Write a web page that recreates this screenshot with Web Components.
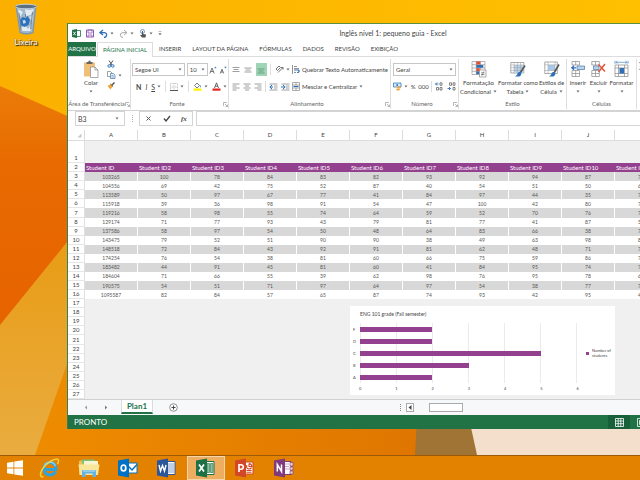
<!DOCTYPE html>
<html lang="pt-BR">
<head>
<meta charset="utf-8">
<title>Inglês nível 1: pequeno guia - Excel</title>
<style>
    html, body {
        height: 100%;
        margin: 0;
    }

    body {
        overflow: hidden;
        font-family: Lato, "Open Sans", sans-serif;
        font-size: 6px;
        line-height: 8px;
        color: #444;
    }
</style>
</head>
<body>
<desk-top>
    <desktop-shortcut icon="bin">Lixeira</desktop-shortcut>
    <excel-window slot="window"></excel-window>
</desk-top>

<script>
    const icons = {
        // title bar
        excel: [9, 9, '<path d="M0 1l5-1v9l-5-1z" fill="#1e7145"/><path d="M5 1.5h3.5v6H5" fill="none" stroke="#1e7145" stroke-width=".8"/><path d="M1.3 2.8l2.4 3.4M3.7 2.8L1.3 6.2" stroke="#fff" stroke-width=".9"/>'],
        save: [8, 9, '<path d="M.5 1h7v7h-7z" fill="#fff" stroke="#8e5bb0"/><path d="M2 1h4v3H2zM2 8V6h4v2" fill="none" stroke="#8e5bb0" stroke-width=".8"/>'],
        undo: [9, 9, '<path d="M4 1L1 3.6 4 6M1.200 3.600H5q3 .2 2.600 2.600T5 8.500" fill="none" stroke="#2f6fb7" stroke-width="1.300"/>'],
        redo: [9, 9, '<path d="M5 1l3 2.600L5 6M7.800 3.600H4q-3 .2-2.600 2.600T4 8.500" fill="none" stroke="#a8a8a8"/>'],
        touch: [8, 9, '<circle cx="3.500" cy="2.500" r="2" fill="none" stroke="#4b86c4" stroke-width=".8"/><path d="M3 2h1v3l3 .6-.4 3H3L1 6l2-.3z" fill="#555"/>'],
        more: [4, 6, '<path d="M.5 1.500h3M.8 3.500h2.400L2 5z" fill="#777" stroke="#777" stroke-width=".5"/>'],
        down: [4, 3, '<path d="M.5.5h3L2 2.500z" fill="#666"/>'],
        launch: [5, 5, '<path d="M.5 4V.5H4M2 2l2.400 2.400M4.500 2.500v2h-2" fill="none" stroke="#999" stroke-width=".7"/>'],
        // clipboard
        paste: [16, 18, '<rect x="1" y="2.500" width="11" height="14" fill="#f0c078"/><path d="M3.500 4V2h1.700q.1-1.500 1.300-1.500T7.800 2h1.700v2z" fill="#666"/><path d="M7.500 7h4.500l3 3v7.500H7.500z" fill="#fff" stroke="#888" stroke-width=".7"/><path d="M12 7v3h3" fill="none" stroke="#888" stroke-width=".7"/>'],
        cut: [8, 8, '<path d="M2 .5L5 5M6 .5L3 5" stroke="#555"/><circle cx="2.200" cy="6" r="1.300" fill="none" stroke="#3b7cc2"/><circle cx="5.800" cy="6" r="1.300" fill="none" stroke="#3b7cc2"/>'],
        copy: [9, 8, '<path d="M.5.5h3l1.500 1.500v3.500H.5z" fill="#fff" stroke="#777" stroke-width=".7"/><path d="M3.500 2.500h3L8 4v3.500H3.500z" fill="#e7f0fa" stroke="#4b76a8" stroke-width=".7"/><path d="M4.500 4.500h2M4.500 6h2.500" stroke="#4b86c4" stroke-width=".6"/>'],
        brush: [8, 8, '<path d="M7.500.5L5 3" stroke="#555" stroke-width="1.400"/><path d="M4 2l2 2-2.500 3.500L.5 4z" fill="#f2a33a"/><path d="M3.500 2l2.600 2.400" stroke="#555"/>'],
        // font
        grow: [8, 8, '<path d="M.8 7.500L3 2l2.200 5.500M1.600 5.500h2.800" fill="none" stroke="#555" stroke-width=".8"/><path d="M5.200 2.300L6.400.5l1.200 1.800z" fill="#3b7cc2"/>'],
        shrink: [8, 8, '<path d="M1.300 7.500L3 3.200l1.700 4.300M1.900 6h2.200" fill="none" stroke="#555" stroke-width=".8"/><path d="M5.200.8l1.200 1.700L7.600.8z" fill="#3b7cc2"/>'],
        borders: [8, 8, '<path d="M.5.5h7v7h-7zM4 .5v7M.5 4h7" fill="none" stroke="#aaa" stroke-width=".6" stroke-dasharray="1 .5"/><path d="M0 7.500h8" stroke="#555"/>'],
        fill: [9, 9, '<path d="M1.500 3.500L4 1l2.500 2.500L4 6z" fill="#fff" stroke="#555" stroke-width=".8"/><path d="M6.500 2.500q2 1 1.500 3.500-1-1.500-1.500-3.500" fill="#3b7cc2"/><path d="M.5 6.500h8v2.200h-8z" fill="#fff200"/>'],
        color: [9, 9, '<path d="M2.500 6L4.500.8 6.500 6M3.200 4.200h2.600" fill="none" stroke="#555" stroke-width=".9"/><path d="M.5 6.500h8v2.200h-8z" fill="#e32222"/>'],
        // alignment
        top: [8, 8, '<path d="M.5 1.500h7M1.500 3.500h5M.5 5.500h7" stroke="#777" stroke-width=".7"/>'],
        middle: [8, 8, '<path d="M.5 2h7M1.500 4h5M.5 6h7" stroke="#777" stroke-width=".7"/>'],
        bottom: [8, 8, '<path d="M.5 3h7M1.500 5h5M.5 7h7" stroke="#4d8a69" stroke-width=".7"/>'],
        orient: [9, 9, '<path d="M1 4l3-3 1.500 1.500-3 3zM3 7.500L8 2.500M8 2.500v2M8 2.500H6" fill="none" stroke="#666" stroke-width=".9"/>'],
        left: [8, 8, '<path d="M.5 1h7M.5 3h4M.5 5h7M.5 7h4" stroke="#777" stroke-width=".7"/>'],
        center: [8, 8, '<path d="M.5 1h7M2 3h4M.5 5h7M2 7h4" stroke="#777" stroke-width=".7"/>'],
        right: [8, 8, '<path d="M.5 1h7M3.500 3h4M.5 5h7M3.500 7h4" stroke="#777" stroke-width=".7"/>'],
        outdent: [9, 8, '<path d="M.5 1h8M5 3h3.500M5 5h3.500M.5 7h8" stroke="#777" stroke-width=".7"/><path d="M3 2L.8 4 3 6M1 4h3" fill="none" stroke="#2f6fb7"/>'],
        indent: [9, 8, '<path d="M.5 1h8M5 3h3.500M5 5h3.500M.5 7h8" stroke="#777" stroke-width=".7"/><path d="M2 2l2.200 2L2 6M0 4h4" fill="none" stroke="#2f6fb7"/>'],
        wrap: [8, 9, '<path d="M.5 0v9M2 1.500h3M2 3.500h5M2 7.500h2" stroke="#777" stroke-width=".8"/><path d="M2 5h4.500q1.500 1.500-.5 2.500H5" fill="none" stroke="#2f6fb7" stroke-width="1.200"/>'],
        merge: [8, 9, '<path d="M.5.5h7v8h-7zM4 .5V3M4 6v2.500M.5 3h7M.5 6h7" fill="none" stroke="#888" stroke-width=".7"/><path d="M1.500 4.500h5" stroke="#2f6fb7" stroke-width="1.200"/>'],
        // number
        money: [9, 9, '<path d="M.5 1h7.500v4H.5z" fill="#dcebfa" stroke="#2f7cc2" stroke-width=".8"/><circle cx="4.200" cy="3" r="1" fill="#2f7cc2"/><ellipse cx="6" cy="5.500" rx="2" ry=".9" fill="#f2a33a"/><ellipse cx="5" cy="7.500" rx="2" ry=".9" fill="#f2a33a"/>'],
        moreDigits: [9, 9, '<path d="M.5 2h3M2 .5L.5 2 2 3.500" fill="none" stroke="#2f6fb7" stroke-width=".9"/><path d="M5 .8h2v2.500H5zM1.500 5.500h2V8h-2zM5 5.500h2V8H5z" fill="none" stroke="#666" stroke-width=".8"/>'],
        lessDigits: [9, 9, '<path d="M.5 6.500h3M2 5l1.500 1.500L2 8" fill="none" stroke="#2f6fb7" stroke-width=".9"/><path d="M2.500.8h2v2.500h-2zM6 .8h2v2.500H6zM6 5.500h2V8H6z" fill="none" stroke="#666" stroke-width=".8"/>'],
        // styles
        conditional: [16, 18, '<path d="M1 1.500h13v13H1zM1 4.700h13M1 8h13M1 11.300h13M5.300 1.500v13M9.600 1.500v13" fill="#fff" stroke="#888" stroke-width=".6"/><path d="M5.300 1.500h4v3h-4zM5.300 8.200h3.500v3H5.300z" fill="#e2502f"/><path d="M5.300 4.900h7v2.900h-7zM5.300 11.500h3v2.800h-3z" fill="#2f6fb7"/><path d="M8.500 10h6.500v7H8.500z" fill="#fff" stroke="#888" stroke-width=".7"/><path d="M10 12.800h3.500M10 14.500h3.500M12.800 11.500l-2 4.200" stroke="#555" stroke-width=".6"/>'],
        table: [16, 18, '<path d="M.8 2.500h13v10.500H.8z" fill="#fff" stroke="#888" stroke-width=".7"/><path d="M4 5h9.500v8H4z" fill="#bcd5ef"/><path d="M.8 5h13M.8 7.700h13M.8 10.400h13M4 2.500V13M7.400 2.500V13M10.600 2.500V13" stroke="#999" stroke-width=".5"/><path d="M15 5.500l-4.500 7" stroke="#555" stroke-width="1.600"/><path d="M10.800 11.500q1.500 3.500-1.500 5H5q2.500-1.500 3-4z" fill="#2f6fb7"/>'],
        cellStyle: [16, 18, '<path d="M.8 2h12.500v11.500H.8z" fill="#fff" stroke="#888" stroke-width=".7"/><path d="M4 5h7v5.500H4z" fill="#a9c9ec"/><path d="M.8 4.800h12.500M.8 10.500h12.500M4 2v11.500M11 2v11.500" stroke="#999" stroke-width=".5"/><path d="M15 4.500l-4.500 7.500" stroke="#555" stroke-width="1.600"/><path d="M10.800 11.500q1.500 3.500-1.500 5H5q2.500-1.500 3-4z" fill="#2f6fb7"/>'],
        // cells
        insert: [14, 18, '<path d="M1 1.500h7.500v3.500H1zM4.700 1.500v3.500M1 10.500h7.500v6H1zM4.700 10.500v6M1 13.500h7.500" fill="#fff" stroke="#888" stroke-width=".7"/><path d="M6 6h7.500v3.500H6z" fill="#bcd5ef" stroke="#4b76a8" stroke-width=".7"/><path d="M3 5.800L.8 7.800 3 9.800M1 7.800h4" fill="none" stroke="#2f6fb7" stroke-width="1.200"/>'],
        remove: [15, 18, '<path d="M.8 1.500h7.500v3.500H.8zM4.500 1.500v3.500M.8 10.500h7.500v6H.8zM4.500 10.500v6M.8 13.500h7.500" fill="#fff" stroke="#888" stroke-width=".7"/><path d="M2.500 6h5.500v3.500H2.500z" fill="#bcd5ef" stroke="#4b76a8" stroke-width=".7"/><path d="M7.500 4.500l6.500 7M14 4l-6.500 8" stroke="#e2502f" stroke-width="1.400"/>'],
        format: [15, 18, '<path d="M1 5h13v11.500H1zM4.500 5v11.500M10.500 5v11.500M1 8h13M1 13.500h13" fill="#fff" stroke="#888" stroke-width=".7"/><path d="M5.500 8h4.500v5.500H5.500z" fill="#2f6fb7"/><path d="M1 .8v3M14 .8v3M2 2.300h11M3.500.8L2 2.300l1.500 1.500M11.500.8L13 2.300l-1.500 1.500" fill="none" stroke="#4b86c4" stroke-width=".7"/>'],
        sum: [6, 18, '<path d="M5.500 2.500h-5l3 3.500-3 3.500h5" fill="none" stroke="#777" stroke-width=".8"/>'],
        // formula bar
        cross: [7, 7, '<path d="M1.500 1.500l4 4M5.500 1.500l-4 4" stroke="#555"/>'],
        check: [8, 7, '<path d="M1 3.500l2 2.500 4-5" fill="none" stroke="#444" stroke-width="1.300"/>'],
        // sheet
        corner: [5, 5, '<path d="M4.500.5v4h-4z" fill="#c8c8c8"/>'],
        prev: [4, 5, '<path d="M3 .5v4L.8 2.500z" fill="#999"/>'],
        next: [4, 5, '<path d="M1 .5v4l2.200-2z" fill="#777"/>'],
        add: [9, 9, '<circle cx="4.500" cy="4.500" r="3.800" fill="#fff" stroke="#777" stroke-width=".8"/><path d="M4.500 2.500v4M2.500 4.500h4" stroke="#444"/>'],
        scroll: [4, 5, '<path d="M3.500 0v5L.5 2.500z" fill="#444"/>'],
        viewNormal: [9, 9, '<path d="M.5.5h8v8h-8zM.5 3h8M.5 5.700h8M3.200.5v8M5.800.5v8" fill="none" stroke="#fff" stroke-width=".8"/>'],
        viewPage: [9, 9, '<path d="M.5.5h8v8h-8z" fill="none" stroke="#fff" stroke-width=".8"/><path d="M2.500 2.500h4v4h-4z" fill="none" stroke="#fff" stroke-width=".8"/>'],
        // desktop
        bin: [24, 32, '<path d="M1.500 3.500l21-.5-3 27q-7 3-14 0z" fill="#7f97ad"/><path d="M3 5l18-.5-2.800 24.500q-6 2-11.500 0z" fill="#a3b8ca"/><path d="M4 6l5 3-3 5zM11 6l5 1 4-1-3 6-5 1zM7 25l4-3 3 4 3-5-.5 7h-8z" fill="#e3ecf3"/><path d="M15 14l4-2-.8 7z" fill="#d2dfe9"/><path d="M6 17l2.500-3 3 1 2-2 2.500 4-1.500 5-4 2-4-2z" fill="#2d70bb"/><path d="M8.500 17.500l2.500-.5 1 2.500-2.500 1.500z" fill="#c9dced"/><path d="M5 10l2 17M11.500 11v3M18.500 9l-2 17" stroke="#63798f" stroke-width=".8"/><ellipse cx="12" cy="3.500" rx="10.800" ry="2.300" fill="#5d7081" stroke="#c5d1db"/>'],
        // taskbar
        windows: [18, 18, '<path d="M1 3.800l6.500-1V8.600H1zM8.300 2.600L17 1.300v7.300H8.300zM1 9.400h6.500v5.900L1 14.300zM8.300 9.400H17v7.300l-8.700-1.300z" fill="#fff"/>'],
        ie: [22, 20, '<path d="M16.500 13.500q-2 3.800-6 3.500-5.300-.6-5.300-6.300 0-5.800 5.600-6.200 6 0 6 7H7" fill="none" stroke="#2fa3e0" stroke-width="3"/><path d="M5 9.500q.6-5 5.700-5.300 4.500 0 5.800 4" fill="none" stroke="#8fd4f7" stroke-width="1.200"/><path d="M4.500 18.500q-3.300 1-3-2.500Q3 8.500 12 3q6.500-3.500 7.500-.5.300 1.500-1 3.500" fill="none" stroke="#f6d13c" stroke-width="1.500"/>'],
        folder: [22, 20, '<path d="M1 3l5-1 1 2h13v13H1z" fill="#e7c35c"/><path d="M4 1.500h13v4H4z" fill="#7bbf7c"/><path d="M6 3h14v4H6z" fill="#f9f3d0"/><path d="M.5 6.500h21L20 17H2z" fill="#f8e79a"/><path d="M4 19v-6q0-1 1-1h12q1 0 1 1v6h-3.500v-3.500h-7V19z" fill="#62b4e6"/><path d="M5 13h12" stroke="#bfe3f7"/>'],
        outlook: [20, 20, '<path d="M9 5h10v10H9z" fill="#fff" stroke="#0072c6"/><path d="M10 8l4 4 5-5.500" fill="none" stroke="#0072c6" stroke-width="1.500"/><path d="M0 2.500L11 .5v19l-11-2z" fill="#0072c6"/><ellipse cx="5.500" cy="10" rx="2.300" ry="3" fill="none" stroke="#fff" stroke-width="1.700"/>'],
        word: [20, 20, '<path d="M9 3.500h9v13H9z" fill="#fff" stroke="#2b579a"/><path d="M11 6h6M11 8h6M11 10h6M11 12h6M11 14h6" stroke="#6f93c6" stroke-width=".9"/><path d="M0 2.500L11 .5v19l-11-2z" fill="#2b579a"/><path d="M2 7l1.500 6 2-5.500 2 5.500L9 7" fill="none" stroke="#fff" stroke-width="1.400"/>'],
        excelApp: [20, 20, '<path d="M9 3.500h9v13H9z" fill="#fff" stroke="#1e7145"/><path d="M11 5.500h2.500v9H11zM14.500 5.500H17v9h-2.500z" fill="#8ec0a2" stroke="#1e7145" stroke-width=".6"/><path d="M0 2.500L11 .5v19l-11-2z" fill="#1e7145"/><path d="M3 6.500l5 7M8 6.500l-5 7" stroke="#fff" stroke-width="1.700"/>'],
        powerpoint: [20, 20, '<path d="M9 4h9v12H9z" fill="#fff" stroke="#d24726"/><path d="M14 5.500v3h3q-.5-3-3-3M12 7q-1.500 3.500 2 4 2 0 2.500-1.500M11.500 12.500h5M11.500 14.200h5" fill="none" stroke="#d24726" stroke-width="1.100"/><path d="M0 2.500L11 .5v19l-11-2z" fill="#d24726"/><path d="M4 14V6.800h2q2.300.2 2.300 2.200T6 11.300H4" fill="none" stroke="#fff" stroke-width="1.600"/>'],
        onenote: [20, 20, '<path d="M9 3.500h8v13H9z" fill="#fff" stroke="#80397b"/><path d="M16 4.500h3v3.500h-3zM16 9h3v3h-3zM16 13h3v3h-3z" fill="#e6d0e5" stroke="#80397b" stroke-width=".6"/><path d="M11 6h4M11 8.500h4M11 11h4" stroke="#b98bb6" stroke-width=".8"/><path d="M0 2.500L11 .5v19l-11-2z" fill="#80397b"/><path d="M3.300 13.500v-7l4.200 7v-7" fill="none" stroke="#fff" stroke-width="1.500"/>']
    };

    function icon(name) {
        const [w, h, body] = icons[name];
        return `<svg width="${w}" height="${h}" viewBox="0 0 ${w} ${h}" aria-hidden="true">${body}</svg>`;
    }

    // Shared reset, repeated in every shadow root
    const base = `
        * { box-sizing: border-box; }
        svg { display: block; flex: none; }
        button, select, input {
            font: inherit;
            color: inherit;
            margin: 0;
            padding: 0;
            border: 0;
            background: none;
            outline: none;
        }
        button { display: flex; align-items: center; justify-content: center; }
    `;

    class DeskTop extends HTMLElement {
        connectedCallback() {
            this.attachShadow({ mode: 'open' });
            this.shadowRoot.innerHTML = `
                <style>
                    ${base}
                    :host {
                        display: flex;
                        flex-direction: column;
                        height: 100vh;
                    }
                    main {
                        position: relative;
                        flex: 1;
                        min-height: 0;
                        overflow: hidden;
                    }
                    .wallpaper {
                        position: absolute;
                        width: 100%;
                        height: 100%;
                    }
                    .shortcuts {
                        position: relative;
                        display: flex;
                        padding: 3px 5px;
                    }
                    ::slotted([slot="window"]) {
                        position: absolute;
                        inset: 23px 0 26px 67px;
                    }
                </style>
                <main>
                    <svg class="wallpaper" viewBox="0 0 640 455" preserveAspectRatio="none" aria-hidden="true">
                        <defs>
                            <linearGradient id="sky" x1="0" x2="1"><stop offset="0" stop-color="#fbb000"/><stop offset="1" stop-color="#ffc000"/></linearGradient>
                            <linearGradient id="deep" x1="0" y1="0" x2="0" y2="1"><stop offset="0" stop-color="#ea7c08"/><stop offset=".25" stop-color="#e86a00"/><stop offset="1" stop-color="#e66000"/></linearGradient>
                            <linearGradient id="sand" x1="0" y1="0" x2="0" y2="1"><stop offset=".1" stop-color="#e99a10"/><stop offset="1" stop-color="#e9ac40"/></linearGradient>
                            <linearGradient id="floor" x1="0" x2="1"><stop offset="0" stop-color="#ee8c00"/><stop offset="1" stop-color="#dd7200"/></linearGradient>
                        </defs>
                        <path d="M0 0h640v455H0z" fill="url(#sky)"/>
                        <path d="M0 86l110 49v54L0 400z" fill="url(#deep)"/>
                        <path d="M0 325L110 189v266H0z" fill="url(#sand)"/>
                        <path d="M35 455L67 364l43-122h367v213z" fill="url(#floor)"/>
                        <path d="M418 400h50l9 55h-62z" fill="#a07434"/>
                        <path d="M465 400h175v55H477z" fill="#f3dfcb"/>
                    </svg>
                    <div class="shortcuts"><slot></slot></div>
                    <slot name="window"></slot>
                </main>
                <task-bar></task-bar>
            `;
        }
    }

    class DesktopShortcut extends HTMLElement {
        connectedCallback() {
            this.attachShadow({ mode: 'open' });
            this.shadowRoot.innerHTML = `
                <style>
                    ${base}
                    :host { display: block; width: 42px; }
                    button {
                        flex-direction: column;
                        gap: 2px;
                        width: 100%;
                        font-size: 8px;
                        line-height: 10px;
                        color: #fff;
                        text-shadow: 0 0 1px #444, 1px 1px 1px #000;
                    }
                </style>
                <button>${icon(this.getAttribute('icon'))}<span><slot></slot></span></button>
            `;
        }
    }

    class TaskBar extends HTMLElement {
        connectedCallback() {
            const apps = [
                ['ie', 'Internet Explorer'], ['folder', 'Explorador de Arquivos'], ['outlook', 'Outlook'],
                ['word', 'Word'], ['excelApp', 'Excel'], ['powerpoint', 'PowerPoint'], ['onenote', 'OneNote']
            ];
            this.attachShadow({ mode: 'open' });
            this.shadowRoot.innerHTML = `
                <style>
                    ${base}
                    :host {
                        display: flex;
                        gap: 1px;
                        height: 25px;
                        background: #e28200;
                        border-top: 1px solid #9c5a08;
                    }
                    button { width: 38px; }
                    button.start { width: 30px; }
                    button.active {
                        background: #eeae62;
                        border: 1px solid #f6d5ab;
                    }
                </style>
                <button class="start" aria-label="Iniciar">${icon('windows')}</button>
                ${apps.map(([name, label]) => `<button class="${name === 'excelApp' ? 'active' : ''}" aria-label="${label}">${icon(name)}</button>`).join('')}
            `;
        }
    }

    class ExcelWindow extends HTMLElement {
        connectedCallback() {
            this.attachShadow({ mode: 'open' });
            this.shadowRoot.innerHTML = `
                <style>
                    ${base}
                    :host {
                        display: flex;
                        flex-direction: column;
                        overflow: hidden;
                        background: #fff;
                        border-top: 1px solid #5e8f3e;
                        border-left: 1px solid #2f8159;
                    }
                    sheet-grid { flex: 1; min-height: 0; }
                </style>
                <title-bar>Inglês nível 1: pequeno guia - Excel</title-bar>
                <ribbon-tabs></ribbon-tabs>
                <ribbon-bar></ribbon-bar>
                <formula-bar></formula-bar>
                <sheet-grid>
                    <bar-chart></bar-chart>
                </sheet-grid>
                <sheet-tabs></sheet-tabs>
                <status-bar>PRONTO</status-bar>
            `;
        }
    }

    class TitleBar extends HTMLElement {
        connectedCallback() {
            this.attachShadow({ mode: 'open' });
            this.shadowRoot.innerHTML = `
                <style>
                    ${base}
                    :host { display: flex; align-items: center; height: 18px; padding-left: 4px; }
                    .tools { display: flex; align-items: center; gap: 5px; width: 88px; }
                    button { gap: 2px; }
                    h1 { flex: 1; margin: 0; padding-right: 14px; font-size: 7px; font-weight: normal; text-align: center; }
                </style>
                <div class="tools">
                    ${icon('excel')}
                    <button aria-label="Salvar">${icon('save')}</button>
                    <button aria-label="Desfazer">${icon('undo')}${icon('down')}</button>
                    <button aria-label="Refazer">${icon('redo')}${icon('down')}</button>
                    <button aria-label="Modo de toque">${icon('touch')}${icon('down')}</button>
                    <button aria-label="Personalizar">${icon('more')}</button>
                </div>
                <h1><slot></slot></h1>
            `;
        }
    }

    class RibbonTabs extends HTMLElement {
        connectedCallback() {
            const tabs = ['INSERIR', 'LAYOUT DA PÁGINA', 'FÓRMULAS', 'DADOS', 'REVISÃO', 'EXIBIÇÃO'];
            this.attachShadow({ mode: 'open' });
            this.shadowRoot.innerHTML = `
                <style>
                    ${base}
                    :host { display: flex; gap: 1px; height: 14px; }
                    button { padding: 0 5px; white-space: nowrap; }
                    .file { width: 28px; padding: 0; background: #217346; color: #fff; }
                    .active {
                        width: 56px;
                        margin-bottom: -1px;
                        background: #fff;
                        border: 1px solid #dcdcdc;
                        border-bottom: 0;
                        color: #217346;
                        z-index: 1;
                    }
                </style>
                <button class="file">ARQUIVO</button>
                <button class="active">PÁGINA INICIAL</button>
                ${tabs.map(t => `<button>${t}</button>`).join('')}
            `;
        }
    }

    class RibbonGroup extends HTMLElement {
        connectedCallback() {
            const launcher = this.hasAttribute('launcher');
            this.attachShadow({ mode: 'open' });
            this.shadowRoot.innerHTML = `
                <style>
                    ${base}
                    :host {
                        display: flex;
                        flex-direction: column;
                        flex: none;
                        border-right: 1px solid #dedede;
                    }
                    .body { flex: 1; display: flex; }
                    footer { display: flex; align-items: center; height: 10px; color: #666; white-space: nowrap; }
                    span { flex: 1; text-align: center; }
                </style>
                <div class="body"><slot></slot></div>
                <footer>
                    <span>${this.getAttribute('label')}</span>
                    ${launcher ? `<button aria-label="Mais opções">${icon('launch')}</button>` : ''}
                </footer>
            `;
        }
    }

    class RibbonBar extends HTMLElement {
        connectedCallback() {
            this.attachShadow({ mode: 'open' });
            this.shadowRoot.innerHTML = `
                <style>
                    ${base}
                    :host {
                        display: flex;
                        height: 55px;
                        padding: 2px 0 1px;
                        border-top: 1px solid #dcdcdc;
                        border-bottom: 1px solid #d2d2d2;
                    }
                    .rows, .stack { display: flex; flex-direction: column; }
                    .rows { width: 100%; padding: 4px 1px 0; gap: 4px; }
                    .row { display: flex; align-items: center; justify-content: space-between; height: 13px; }
                    .stack { gap: 3px; padding-top: 1px; }
                    .big { flex-direction: column; justify-content: flex-start; padding-top: 1px; line-height: 9px; }
                    .big span { display: flex; align-items: center; gap: 2px; white-space: nowrap; }
                    .big span + svg { margin-top: 3px; }
                    .tool { gap: 2px; white-space: nowrap; }
                    .tool.on { width: 11px; height: 13px; background: #9fd5b7; }
                    .box { display: flex; align-items: center; height: 13px; padding: 0 2px; border: 1px solid #c6c6c6; }
                    .box select { flex: 1; min-width: 0; appearance: none; }
                    .rule { width: 1px; height: 11px; background: #dedede; }
                    .next { width: 4px; margin-left: 2px; overflow: hidden; align-items: flex-start; }
                    b, i, u { font-size: 7px; }
                </style>
                <ribbon-group label="Área de Transferência" launcher style="width: 63px">
                    <div style="display: flex; padding-left: 13px; gap: 6px">
                        <button class="big" style="width: 20px">${icon('paste')}<span>Colar</span>${icon('down')}</button>
                        <div class="stack">
                            <button class="tool" aria-label="Recortar" style="align-self: flex-start">${icon('cut')}</button>
                            <button class="tool" aria-label="Copiar">${icon('copy')}${icon('down')}</button>
                            <button class="tool" aria-label="Pincel" style="align-self: flex-start">${icon('brush')}</button>
                        </div>
                    </div>
                </ribbon-group>
                <ribbon-group label="Fonte" launcher style="width: 98px">
                    <div class="rows">
                        <div class="row">
                            <label class="box" style="width: 53px"><select aria-label="Fonte"><option>Segoe UI</option></select>${icon('down')}</label>
                            <label class="box" style="width: 21px"><select aria-label="Tamanho"><option>10</option></select>${icon('down')}</label>
                            <button class="tool" aria-label="Aumentar">${icon('grow')}</button>
                            <button class="tool" aria-label="Diminuir">${icon('shrink')}</button>
                        </div>
                        <div class="row" style="padding-left: 4px">
                            <button><b>N</b></button>
                            <button><i>I</i></button>
                            <button class="tool"><u>S</u>${icon('down')}</button>
                            <span class="rule"></span>
                            <button class="tool" aria-label="Bordas">${icon('borders')}${icon('down')}</button>
                            <span class="rule"></span>
                            <button class="tool" aria-label="Preenchimento">${icon('fill')}${icon('down')}</button>
                            <button class="tool" aria-label="Cor da fonte">${icon('color')}${icon('down')}</button>
                        </div>
                    </div>
                </ribbon-group>
                <ribbon-group label="Alinhamento" launcher style="width: 162px">
                    <div class="rows" style="width: 62px; padding-left: 3px">
                        <div class="row">
                            <button aria-label="Superior">${icon('top')}</button>
                            <button aria-label="Meio">${icon('middle')}</button>
                            <button class="tool on" aria-label="Inferior">${icon('bottom')}</button>
                            <span class="rule"></span>
                            <button class="tool" aria-label="Orientação">${icon('orient')}${icon('down')}</button>
                        </div>
                        <div class="row">
                            <button aria-label="Esquerda">${icon('left')}</button>
                            <button aria-label="Centro">${icon('center')}</button>
                            <button aria-label="Direita">${icon('right')}</button>
                            <span class="rule"></span>
                            <button aria-label="Diminuir recuo">${icon('outdent')}</button>
                            <button aria-label="Aumentar recuo">${icon('indent')}</button>
                        </div>
                    </div>
                    <div class="rows" style="width: 99px; align-items: flex-start">
                        <div class="row"><button class="tool">${icon('wrap')}Quebrar Texto Automaticamente</button></div>
                        <div class="row"><button class="tool">${icon('merge')}Mesclar e Centralizar ${icon('down')}</button></div>
                    </div>
                </ribbon-group>
                <ribbon-group label="Número" launcher style="width: 68px">
                    <div class="rows" style="padding: 4px 2px 0">
                        <label class="box"><select aria-label="Formato"><option>Geral</option></select>${icon('down')}</label>
                        <div class="row">
                            <button class="tool" aria-label="Moeda">${icon('money')}${icon('down')}</button>
                            <button>%</button>
                            <button>000</button>
                            <span class="rule"></span>
                            <button aria-label="Aumentar casas">${icon('moreDigits')}</button>
                            <button aria-label="Diminuir casas">${icon('lessDigits')}</button>
                        </div>
                    </div>
                </ribbon-group>
                <ribbon-group label="Estilo" style="width: 108px">
                    <button class="big" style="width: 39px">${icon('conditional')}<span>Formatação</span><span>Condicional ${icon('down')}</span></button>
                    <button class="big" style="width: 40px">${icon('table')}<span>Formatar como</span><span>Tabela ${icon('down')}</span></button>
                    <button class="big" style="width: 27px">${icon('cellStyle')}<span>Estilos de</span><span>Célula ${icon('down')}</span></button>
                </ribbon-group>
                <ribbon-group label="Células" style="width: 70px">
                    <button class="big" style="width: 22px">${icon('insert')}<span>Inserir</span>${icon('down')}</button>
                    <button class="big" style="width: 19px">${icon('remove')}<span>Excluir</span>${icon('down')}</button>
                    <button class="big" style="width: 27px">${icon('format')}<span>Formatar</span>${icon('down')}</button>
                </ribbon-group>
                <button class="big next" aria-label="Soma">${icon('sum')}</button>
            `;
        }
    }

    class FormulaBar extends HTMLElement {
        connectedCallback() {
            this.attachShadow({ mode: 'open' });
            this.shadowRoot.innerHTML = `
                <style>
                    ${base}
                    :host { display: flex; align-items: center; gap: 3px; padding: 0 0 4px 7px; height: 19px; }
                    .name, .tools, .formula { height: 15px; border: 1px solid #d4d4d4; }
                    .name { display: flex; align-items: center; width: 50px; padding: 0 5px 0 2px; }
                    .name input { flex: 1; min-width: 0; font-size: 7px; }
                    .tools { display: flex; align-items: center; justify-content: space-around; width: 54px; }
                    .grip { width: 5px; height: 7px; margin-right: 3px; border-right: 1px dotted #aaa; }
                    .formula { flex: 1; min-width: 0; border-right: 0; }
                    .fx { font: italic bold 7px "Liberation Serif", serif; }
                </style>
                <label class="name"><input aria-label="Caixa de nome" value="B3">${icon('down')}</label>
                <span class="grip"></span>
                <div class="tools">
                    <button aria-label="Cancelar">${icon('cross')}</button>
                    <button aria-label="Inserir">${icon('check')}</button>
                    <button class="fx">fx</button>
                </div>
                <input class="formula" aria-label="Fórmula">
            `;
        }
    }

    class SheetGrid extends HTMLElement {
        connectedCallback() {
            const columns = [...'ABCDEFGHIJ', ''];
            const data = [
                [103265, 100, 78, 84, 83, 82, 93, 92, 94, 87, 78],
                [104556, 69, 42, 75, 52, 87, 40, 54, 51, 50, 62],
                [113589, 50, 97, 67, 77, 41, 84, 97, 44, 35, 71],
                [115918, 39, 36, 98, 91, 54, 47, 100, 42, 80, 74],
                [119216, 58, 98, 55, 74, 64, 59, 52, 70, 76, 73],
                [129174, 71, 77, 93, 43, 79, 81, 77, 41, 87, 55],
                [137586, 58, 97, 54, 50, 48, 64, 83, 66, 38, 78],
                [143475, 79, 52, 51, 90, 90, 38, 49, 63, 98, 87],
                [148518, 72, 84, 43, 92, 91, 81, 62, 48, 71, 72],
                [174254, 76, 54, 38, 81, 60, 66, 75, 59, 86, 75],
                [183482, 44, 91, 45, 81, 60, 41, 84, 95, 74, 71],
                [184604, 71, 66, 55, 39, 62, 98, 76, 95, 78, 60],
                [190575, 54, 51, 71, 97, 64, 97, 54, 38, 77, 71],
                [1095587, 82, 84, 57, 65, 87, 74, 93, 42, 95, 45]
            ];
            const cells = (row, list) => `<tr><th scope="row">${row}</th>${list.map(v => `<td>${v}</td>`).join('')}</tr>`;
            const empty = columns.map(() => '');
            const rows = [];
            for (let r = 17; r <= 27; r++) rows.push(cells(r, empty));

            this.attachShadow({ mode: 'open' });
            this.shadowRoot.innerHTML = `
                <style>
                    ${base}
                    :host { display: block; position: relative; overflow: hidden; background: #f0f0f0; }
                    table {
                        width: 600px;
                        height: 100%;
                        table-layout: fixed;
                        border-collapse: separate;
                        border-spacing: 0;
                        font-size: 5px;
                        line-height: 8px;
                    }
                    th, td { padding: 0; text-align: center; font-weight: normal; overflow: hidden; white-space: nowrap; }
                    th { background: #fff; font-size: 6px; }
                    thead th { height: 11px; border-right: 1px solid #dcdcdc; border-bottom: 1px solid #dcdcdc; }
                    thead svg { margin-left: 9px; }
                    tbody th { border-bottom: 1px solid #e6e6e6; border-right: 1px solid #e0e0e0; }
                    .tall th { height: 22px; vertical-align: bottom; }
                    .names td {
                        background: #93408f;
                        color: #fff;
                        font-size: 6px;
                        text-align: left;
                        padding-left: 1px;
                    }
                    .data td { background: #fff; border-right: 1px solid #fff; color: #555; }
                    .data tr:nth-child(odd) td { background: #d8d8d8; }
                    .float { position: absolute; right: 25px; bottom: 4px; }
                </style>
                <table>
                    <colgroup><col style="width: 17px">${columns.map(() => '<col>').join('')}</colgroup>
                    <thead><tr><th>${icon('corner')}</th>${columns.map(c => `<th scope="col">${c}</th>`).join('')}</tr></thead>
                    <tbody class="tall">${cells(1, empty)}</tbody>
                    <tbody class="names">${cells(2, columns.map((c, i) => 'Student ID' + (i ? i + 1 : '')))}</tbody>
                    <tbody class="data">${data.map((list, i) => cells(i + 3, list)).join('')}</tbody>
                    <tbody>${rows.join('')}</tbody>
                </table>
                <div class="float"><slot></slot></div>
            `;
        }
    }

    class BarChart extends HTMLElement {
        connectedCallback() {
            const bars = [['F', 2], ['D', 2], ['C', 5], ['B', 3], ['A', 2]];
            const max = 6;
            this.attachShadow({ mode: 'open' });
            this.shadowRoot.innerHTML = `
                <style>
                    ${base}
                    :host {
                        display: block;
                        width: 265px;
                        height: 89px;
                        padding: 4px 2px 0 3px;
                        background: #fff;
                        font-size: 4px;
                        line-height: 5px;
                    }
                    h2 { margin: 0 0 5px 7px; font-size: 5px; font-weight: normal; line-height: 8px; }
                    .chart { display: flex; }
                    .names, .plot { display: flex; flex-direction: column; height: 60px; }
                    .names { width: 7px; }
                    .names span, .plot div { flex: 1; display: flex; align-items: center; }
                    .plot {
                        width: 217px;
                        background: repeating-linear-gradient(90deg, #ebebeb 0 1px, transparent 1px 36px);
                    }
                    .plot i { height: 5px; background: #93408f; }
                    .axis { display: flex; justify-content: space-between; width: 220px; margin-left: 6px; padding-top: 3px; }
                    .legend { display: flex; align-items: center; gap: 3px; padding-left: 9px; }
                    .legend::before { content: ""; width: 3px; height: 3px; background: #93408f; }
                </style>
                <h2>ENG 101 grade (Fall semester)</h2>
                <div class="chart">
                    <div class="names">${bars.map(([n]) => `<span>${n}</span>`).join('')}</div>
                    <div class="plot">${bars.map(([, v]) => `<div><i style="width: ${v / max * 100}%"></i></div>`).join('')}</div>
                    <div class="legend">Number of<br>students</div>
                </div>
                <div class="axis">${[0, 1, 2, 3, 4, 5, 6].map(n => `<span>${n}</span>`).join('')}</div>
            `;
        }
    }

    class SheetTabs extends HTMLElement {
        connectedCallback() {
            this.attachShadow({ mode: 'open' });
            this.shadowRoot.innerHTML = `
                <style>
                    ${base}
                    :host {
                        display: flex;
                        align-items: center;
                        height: 16px;
                        background: #f7f8fa;
                        border-top: 1px solid #d0d0d0;
                    }
                    .nav { display: flex; gap: 16px; width: 53px; padding-left: 16px; }
                    .tab {
                        align-self: stretch;
                        width: 32px;
                        margin-bottom: 1px;
                        background: #fff;
                        border: 1px solid #dcdcdc;
                        border-top: 0;
                        border-bottom: 2px solid #217346;
                        color: #217346;
                        font-size: 8px;
                        font-weight: bold;
                    }
                    .add { margin: 0 auto 0 16px; }
                    .scroll { display: flex; align-items: center; width: 240px; }
                    .grip { width: 6px; height: 7px; border-left: 1px dotted #888; }
                    .arrow { width: 8px; height: 9px; border: 1px solid #aaa; background: #fff; }
                    .thumb { width: 34px; height: 9px; margin-left: 15px; border: 1px solid #aaa; background: #fff; }
                </style>
                <div class="nav">
                    <button aria-label="Anterior">${icon('prev')}</button>
                    <button aria-label="Próxima">${icon('next')}</button>
                </div>
                <button class="tab">Plan1</button>
                <button class="add" aria-label="Nova planilha">${icon('add')}</button>
                <div class="scroll">
                    <span class="grip"></span>
                    <button class="arrow" aria-label="Rolar">${icon('scroll')}</button>
                    <span class="thumb"></span>
                </div>
            `;
        }
    }

    class StatusBar extends HTMLElement {
        connectedCallback() {
            this.attachShadow({ mode: 'open' });
            this.shadowRoot.innerHTML = `
                <style>
                    ${base}
                    :host {
                        display: flex;
                        align-items: center;
                        height: 14px;
                        padding-left: 6px;
                        overflow: hidden;
                        background: #217346;
                        color: #fff;
                        font-size: 8px;
                    }
                    span { flex: 1; }
                    button { width: 22px; height: 14px; }
                    .on { background: #17603a; }
                    .last { width: 10px; justify-content: flex-start; padding-left: 7px; overflow: hidden; }
                </style>
                <span><slot></slot></span>
                <button class="on" aria-label="Normal">${icon('viewNormal')}</button>
                <button class="last" aria-label="Layout da Página">${icon('viewPage')}</button>
            `;
        }
    }

    customElements.define('task-bar', TaskBar);
    customElements.define('desktop-shortcut', DesktopShortcut);
    customElements.define('title-bar', TitleBar);
    customElements.define('ribbon-tabs', RibbonTabs);
    customElements.define('ribbon-group', RibbonGroup);
    customElements.define('ribbon-bar', RibbonBar);
    customElements.define('formula-bar', FormulaBar);
    customElements.define('bar-chart', BarChart);
    customElements.define('sheet-grid', SheetGrid);
    customElements.define('sheet-tabs', SheetTabs);
    customElements.define('status-bar', StatusBar);
    customElements.define('excel-window', ExcelWindow);
    customElements.define('desk-top', DeskTop);
</script>
</body>
</html>
